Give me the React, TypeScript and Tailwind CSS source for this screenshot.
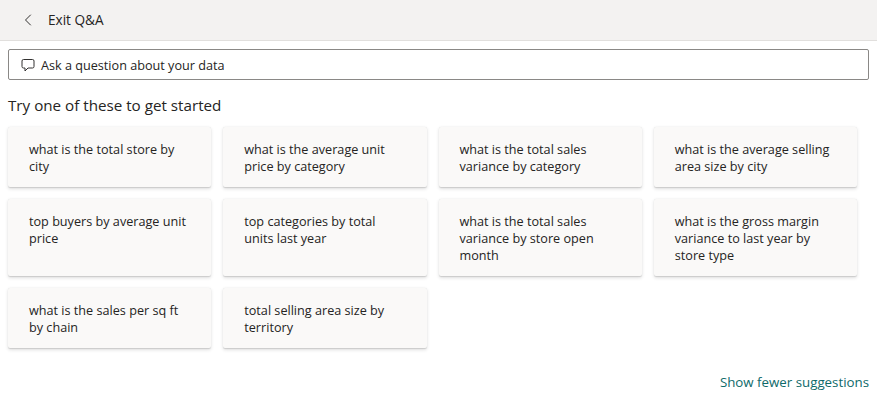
import { ChevronLeft } from "lucide-react";

const suggestions = [
  "what is the total store by city",
  "what is the average unit price by category",
  "what is the total sales variance by category",
  "what is the average selling area size by city",
  "top buyers by average unit price",
  "top categories by total units last year",
  "what is the total sales variance by store open month",
  "what is the gross margin variance to last year by store type",
  "what is the sales per sq ft by chain",
  "total selling area size by territory",
];

export default function App() {
  return (
    <div className="h-[404px] w-[877px] overflow-hidden bg-white font-['Open_Sans',sans-serif] text-[#252423]">
      {/* Header */}
      <div className="flex h-[41px] items-center border-b border-[#e1dfdd] bg-[#f3f2f1] pl-[18px]">
        <ChevronLeft size={20} strokeWidth={1.2} className="text-[#323130]" />
        <span className="ml-[10px] text-[13.6px]">Exit Q&amp;A</span>
      </div>

      {/* Search */}
      <div className="mx-2 mt-2 flex h-[31px] w-[861px] items-center rounded-[2px] border border-[#8a8886] pl-3">
        <svg width="14" height="14" viewBox="0 0 14 14" fill="none" stroke="#323130" strokeWidth="1">
          <path d="M2.5 1.5h9a1.5 1.5 0 0 1 1.5 1.5v5.5a1.5 1.5 0 0 1-1.5 1.5H7l-3 3v-3H2.500a1.500 1.500 0 0 1-1.500-1.500V3a1.500 1.500 0 0 1 1.500-1.500z" />
        </svg>
        <span className="ml-[6px] pt-[1px] text-[12.65px]">Ask a question about your data</span>
      </div>

      <h2 className="ml-2 mt-[14px] text-[15.2px] leading-[22px]">Try one of these to get started</h2>

      {/* Suggestions */}
      <div className="ml-2 mt-[11px] grid w-[849px] grid-cols-4 gap-3">
        {suggestions.map((s) => (
          <div
            key={s}
            className="min-h-[60px] rounded-[2px] bg-[#faf9f8] pb-[12px] pl-[21px] pr-[22px] pt-[14px] text-[12.65px] leading-[17px] shadow-[0_1.6px_3.6px_rgba(0,0,0,0.13),0_0.3px_0.9px_rgba(0,0,0,0.11)]"
          >
            {s}
          </div>
        ))}
      </div>

      <div className="mr-2 mt-[25px] text-right text-[13.3px] leading-[18px] text-[#0e6a6a]">
        Show fewer suggestions
      </div>
    </div>
  );
}
